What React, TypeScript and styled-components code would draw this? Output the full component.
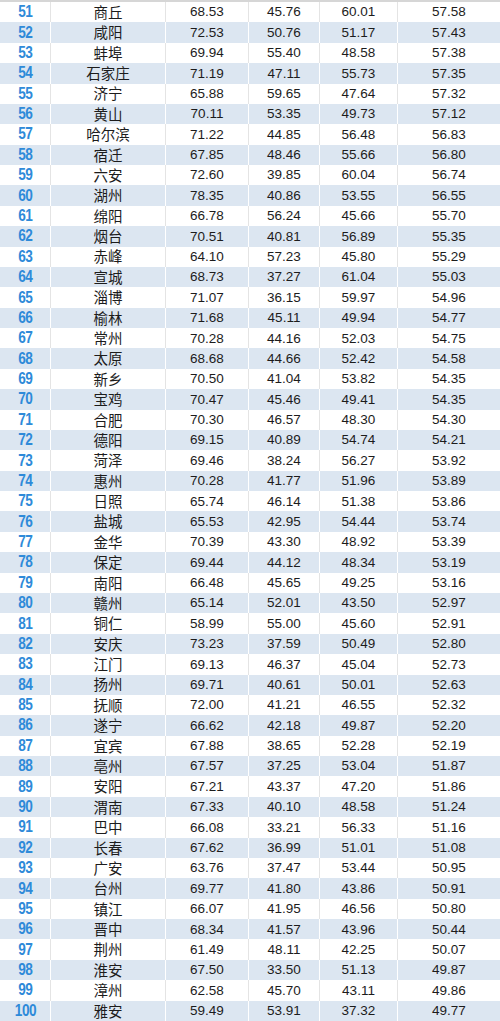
import React from "react";
import styled, { createGlobalStyle } from "styled-components";

const GlobalStyle = createGlobalStyle`
  html, body {
    margin: 0;
    padding: 0;
    background: #ffffff;
  }
`;

const rows: [number, string, string, string, string, string][] = [
  [51, "商丘", "68.53", "45.76", "60.01", "57.58"],
  [52, "咸阳", "72.53", "50.76", "51.17", "57.43"],
  [53, "蚌埠", "69.94", "55.40", "48.58", "57.38"],
  [54, "石家庄", "71.19", "47.11", "55.73", "57.35"],
  [55, "济宁", "65.88", "59.65", "47.64", "57.32"],
  [56, "黄山", "70.11", "53.35", "49.73", "57.12"],
  [57, "哈尔滨", "71.22", "44.85", "56.48", "56.83"],
  [58, "宿迁", "67.85", "48.46", "55.66", "56.80"],
  [59, "六安", "72.60", "39.85", "60.04", "56.74"],
  [60, "湖州", "78.35", "40.86", "53.55", "56.55"],
  [61, "绵阳", "66.78", "56.24", "45.66", "55.70"],
  [62, "烟台", "70.51", "40.81", "56.89", "55.35"],
  [63, "赤峰", "64.10", "57.23", "45.80", "55.29"],
  [64, "宣城", "68.73", "37.27", "61.04", "55.03"],
  [65, "淄博", "71.07", "36.15", "59.97", "54.96"],
  [66, "榆林", "71.68", "45.11", "49.94", "54.77"],
  [67, "常州", "70.28", "44.16", "52.03", "54.75"],
  [68, "太原", "68.68", "44.66", "52.42", "54.58"],
  [69, "新乡", "70.50", "41.04", "53.82", "54.35"],
  [70, "宝鸡", "70.47", "45.46", "49.41", "54.35"],
  [71, "合肥", "70.30", "46.57", "48.30", "54.30"],
  [72, "德阳", "69.15", "40.89", "54.74", "54.21"],
  [73, "菏泽", "69.46", "38.24", "56.27", "53.92"],
  [74, "惠州", "70.28", "41.77", "51.96", "53.89"],
  [75, "日照", "65.74", "46.14", "51.38", "53.86"],
  [76, "盐城", "65.53", "42.95", "54.44", "53.74"],
  [77, "金华", "70.39", "43.30", "48.92", "53.39"],
  [78, "保定", "69.44", "44.12", "48.34", "53.19"],
  [79, "南阳", "66.48", "45.65", "49.25", "53.16"],
  [80, "赣州", "65.14", "52.01", "43.50", "52.97"],
  [81, "铜仁", "58.99", "55.00", "45.60", "52.91"],
  [82, "安庆", "73.23", "37.59", "50.49", "52.80"],
  [83, "江门", "69.13", "46.37", "45.04", "52.73"],
  [84, "扬州", "69.71", "40.61", "50.01", "52.63"],
  [85, "抚顺", "72.00", "41.21", "46.55", "52.32"],
  [86, "遂宁", "66.62", "42.18", "49.87", "52.20"],
  [87, "宜宾", "67.88", "38.65", "52.28", "52.19"],
  [88, "亳州", "67.57", "37.25", "53.04", "51.87"],
  [89, "安阳", "67.21", "43.37", "47.20", "51.86"],
  [90, "渭南", "67.33", "40.10", "48.58", "51.24"],
  [91, "巴中", "66.08", "33.21", "56.33", "51.16"],
  [92, "长春", "67.62", "36.99", "51.01", "51.08"],
  [93, "广安", "63.76", "37.47", "53.44", "50.95"],
  [94, "台州", "69.77", "41.80", "43.86", "50.91"],
  [95, "镇江", "66.07", "41.95", "46.56", "50.80"],
  [96, "晋中", "68.34", "41.57", "43.96", "50.44"],
  [97, "荆州", "61.49", "48.11", "42.25", "50.07"],
  [98, "淮安", "67.50", "33.50", "51.13", "49.87"],
  [99, "漳州", "62.58", "45.70", "43.11", "49.86"],
  [100, "雅安", "59.49", "53.91", "37.32", "49.77"],
];

const Table = styled.div`
  width: 500px;
  height: 1021px;
  box-sizing: border-box;
  border-top: 2px solid #d6d6d6;
  display: grid;
  grid-template-rows: repeat(50, 1fr);
`;

const Row = styled.div<{ $shaded: boolean }>`
  display: grid;
  grid-template-columns: 50px 115px 83px 71px 78px 1fr;
  background: ${(p) => (p.$shaded ? "#dce6f1" : "#ffffff")};
  --line: ${(p) => (p.$shaded ? "#ffffff" : "#e4e4e4")};
`;

const Cell = styled.div`
  display: flex;
  align-items: center;
  justify-content: center;
  border-left: 1px solid var(--line);
  color: #1c1c1c;
  font-family: "Liberation Sans", Arial, sans-serif;
  font-size: 13.5px;
  line-height: 1;

  &:first-child {
    border-left: none;
  }
`;

const Rank = styled(Cell)`
  color: #2e8ad9;
  font-weight: bold;
  font-size: 16px;
`;

const Narrow = styled.span`
  display: inline-block;
  letter-spacing: -0.6px;
  transform: scaleX(0.85);
`;

const City = styled(Cell)`
  font-family: "Noto Sans CJK SC", "Noto Sans", sans-serif;
  font-size: 14.5px;
`;

export default function App() {
  return (
    <>
      <GlobalStyle />
      <Table>
        {rows.map(([rank, city, a, b, c, d], i) => (
          <Row key={rank} $shaded={i % 2 === 1}>
            <Rank>
              <Narrow>{rank}</Narrow>
            </Rank>
            <City>{city}</City>
            <Cell>{a}</Cell>
            <Cell>{b}</Cell>
            <Cell>{c}</Cell>
            <Cell>{d}</Cell>
          </Row>
        ))}
      </Table>
    </>
  );
}
